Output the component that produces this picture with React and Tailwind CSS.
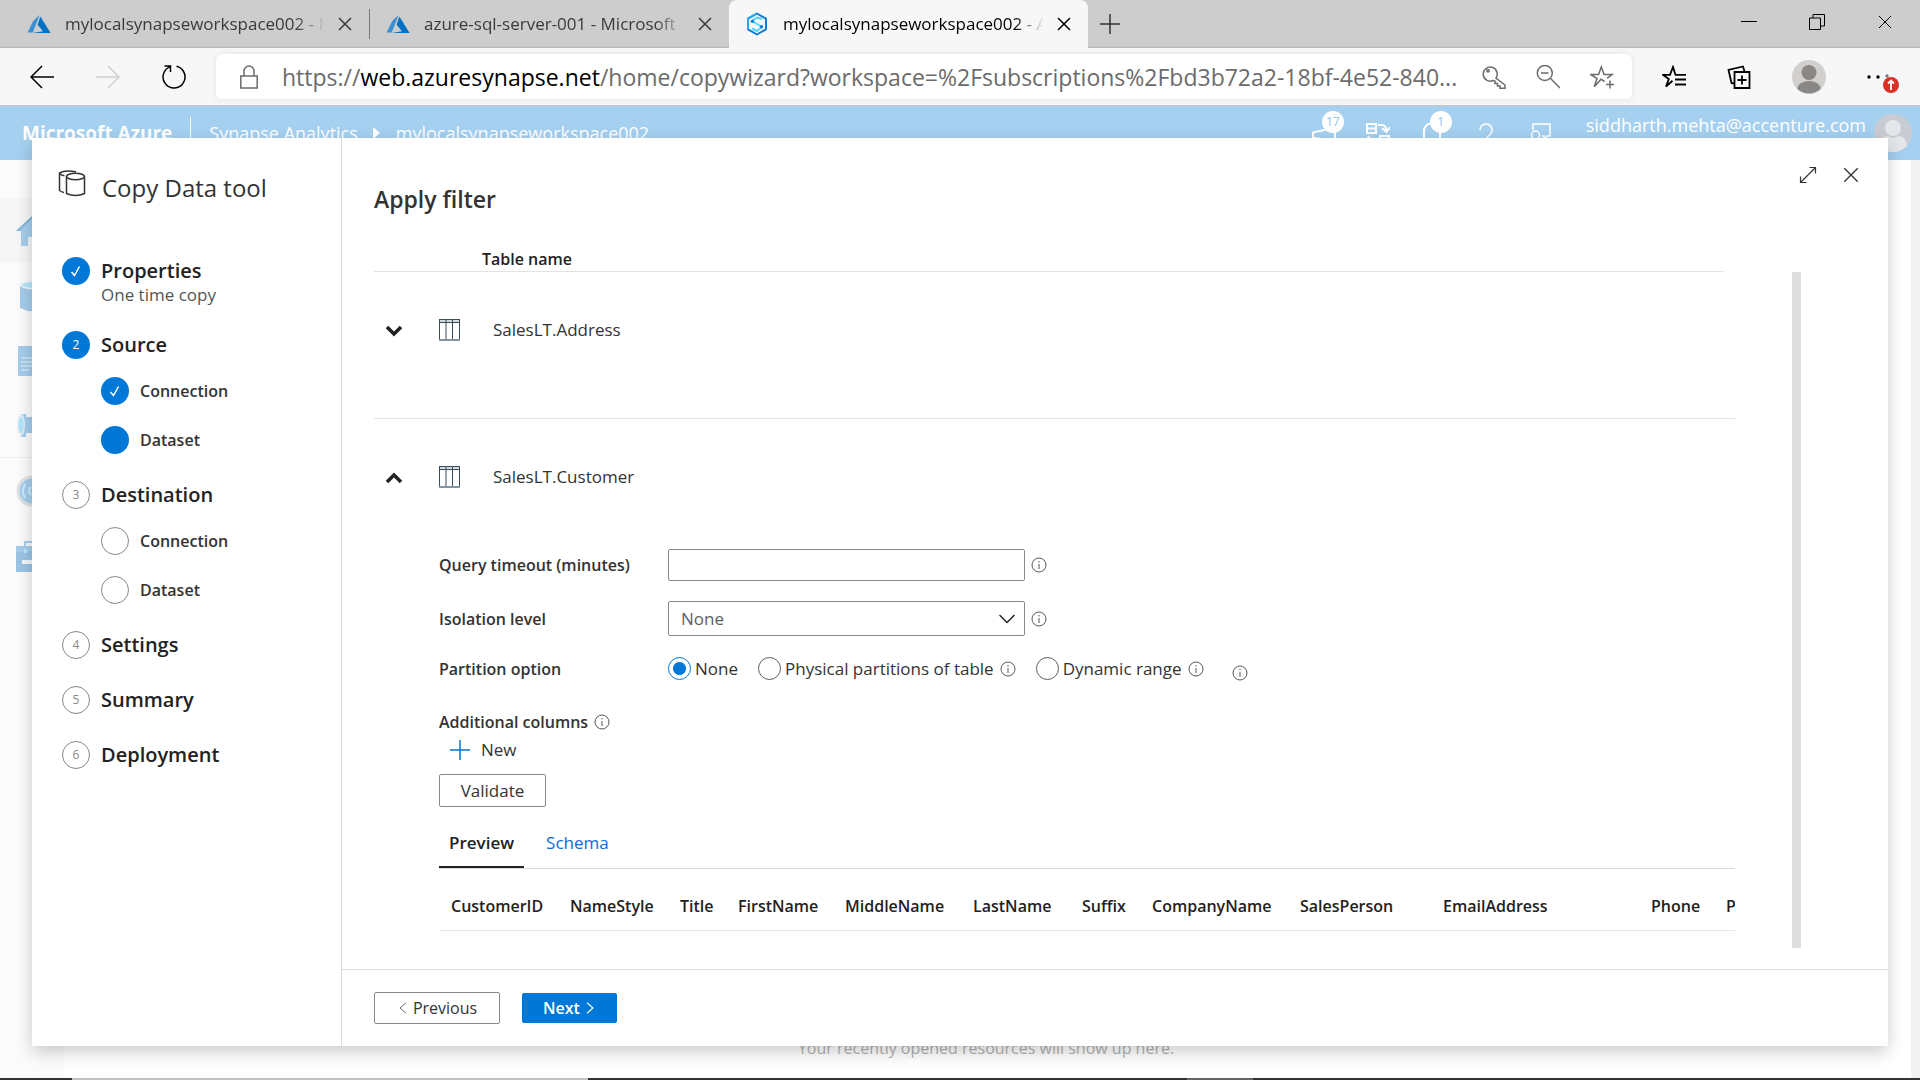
import { useState } from 'react';
import clsx from 'clsx';

const browserTabs = [
  { id: 1, title: 'mylocalsynapseworkspace002 - M', icon: 'azure' },
  { id: 2, title: 'azure-sql-server-001 - Microsoft', icon: 'azure' },
  { id: 3, title: 'mylocalsynapseworkspace002 - A', icon: 'synapse', active: true },
];

const steps = [
  { id: 1, name: 'Properties', caption: 'One time copy', state: 'done' },
  {
    id: 2,
    name: 'Source',
    state: 'current',
    children: [
      { name: 'Connection', state: 'done' },
      { name: 'Dataset', state: 'current' },
    ],
  },
  {
    id: 3,
    name: 'Destination',
    children: [{ name: 'Connection' }, { name: 'Dataset' }],
  },
  { id: 4, name: 'Settings' },
  { id: 5, name: 'Summary' },
  { id: 6, name: 'Deployment' },
];

const columns = [
  { name: 'CustomerID', width: 119 },
  { name: 'NameStyle', width: 110 },
  { name: 'Title', width: 58 },
  { name: 'FirstName', width: 107 },
  { name: 'MiddleName', width: 128 },
  { name: 'LastName', width: 109 },
  { name: 'Suffix', width: 70 },
  { name: 'CompanyName', width: 148 },
  { name: 'SalesPerson', width: 143 },
  { name: 'EmailAddress', width: 208 },
  { name: 'Phone', width: 75 },
  { name: 'PasswordHash', width: 140 },
];

const Svg = ({ className = 'size-6', box = 24, stroke = 1.5, children }) => (
  <svg
    viewBox={`0 0 ${box} ${box}`}
    className={clsx('shrink-0', className)}
    fill="none"
    stroke="currentColor"
    strokeWidth={stroke}
    aria-hidden="true"
  >
    {children}
  </svg>
);

const CloseIcon = ({ className = 'size-4', stroke = 1.5 }) => (
  <Svg className={className} box={16} stroke={stroke}>
    <path d="M2 2l12 12M14 2L2 14" />
  </Svg>
);

const AzureLogo = () => (
  <Svg stroke={0}>
    <path d="M12.6 3L6.2 8.9 0.6 20.5h5.2L12.6 3z" fill="#3b8fd3" />
    <path d="M13.4 4.5l-2.8 8.2 5.4 6.6L5.6 21H23.6L13.4 4.5z" fill="#0072c6" />
  </Svg>
);

const SynapseLogo = () => (
  <Svg stroke={2}>
    <path d="M12 1.500l9 5.200v10.600l-9 5.200-9-5.200V6.700z" stroke="#0f7bd8" strokeLinejoin="round" />
    <path d="M12 1.500l-9 5.200v10.600" stroke="#2aa5ee" strokeLinejoin="round" />
    <path d="M17 7l-5-1.500-5 3.500 10 6-5 4-5-2.500" stroke="#50d5f5" strokeLinejoin="round" />
    <circle cx="7.500" cy="9.300" r="1.700" fill="#0f7bd8" stroke="none" />
    <circle cx="16.500" cy="14.700" r="1.700" fill="#0f7bd8" stroke="none" />
  </Svg>
);

const InfoIcon = () => (
  <Svg className="size-4 text-[#555]" box={16} stroke={1}>
    <circle cx="8" cy="8" r="7" />
    <path d="M8 7v5M8 4v1.500" />
  </Svg>
);

const TableIcon = () => (
  <svg viewBox="0 0 21 22" className="h-[22px] w-[21px] shrink-0" fill="none" stroke="#3b4d58" aria-hidden="true">
    <rect x="0.500" y="0.500" width="20" height="3" fill="#d3dadd" />
    <path d="M0.500 0.500v21M7 0.500v21M13.500 0.500v21M20.500 0.500v21" />
    <path d="M0 21h21" stroke="#8295a0" strokeWidth="2" />
  </svg>
);

const BrowserTabs = () => (
  <div className="flex h-12 items-stretch bg-[#cdcdcd] pl-[11px] shadow-[inset_0_-2px_2px_-1px_#b0b0b0]">
    {browserTabs.map((tab) => (
      <div
        key={tab.id}
        className={clsx(
          'flex w-[359px] min-w-0 items-center px-4',
          tab.active ? 'rounded-t-lg bg-[#f7f7f7] text-black' : 'text-[#3a3a3a]'
        )}
      >
        {tab.icon === 'azure' ? <AzureLogo /> : <SynapseLogo />}
        <span className="mr-1 ml-3.5 min-w-0 flex-1 overflow-hidden whitespace-nowrap text-[17px] leading-6 [mask-image:linear-gradient(to_right,black_86%,transparent_97%)]">
          {tab.title}
        </span>
        <button type="button" aria-label="Close tab">
          <CloseIcon />
        </button>
        {tab.id === 1 && <span className="-mr-4 ml-4 h-[30px] w-px bg-[#777]" />}
      </div>
    ))}
    <button type="button" aria-label="New tab" className="ml-2.5 text-[#333]">
      <Svg>
        <path d="M12 2v20M2 12h20" />
      </Svg>
    </button>
    <div className="ml-auto flex items-center gap-[52px] pr-[27px] pb-1 text-black">
      <button type="button" aria-label="Minimize">
        <Svg className="size-4" box={16} stroke={1}>
          <path d="M0 7.500h16" />
        </Svg>
      </button>
      <button type="button" aria-label="Restore">
        <Svg className="size-4" box={16} stroke={1}>
          <path d="M0.500 4h11v11.500h-11zM4 4V0.500h11.500V12h-4" />
        </Svg>
      </button>
      <button type="button" aria-label="Close">
        <CloseIcon stroke={1} />
      </button>
    </div>
  </div>
);

const AddressBar = () => (
  <div className="flex h-[58px] items-center border-b border-[#c8c8c8] bg-[#f7f7f7] pr-[21px] pl-[30px]">
    <div className="flex gap-[42px]">
      <button type="button" aria-label="Back">
        <Svg stroke={1.5}>
          <path d="M24 12H1M12 1L1 12l11 11" />
        </Svg>
      </button>
      <button type="button" aria-label="Forward" className="text-[#cfcfcf]">
        <Svg>
          <path d="M0 12h23M12 1l11 11-11 11" />
        </Svg>
      </button>
      <button type="button" aria-label="Refresh">
        <Svg stroke={1.5}>
          <path d="M14.500 1.300A11 11 0 1 1 8.500 1.600M2.500 1h6v6" />
        </Svg>
      </button>
    </div>

    <div className="mx-[30px] flex h-[45px] min-w-0 flex-1 items-center rounded-md bg-white pr-[18px] pl-6 text-[#6b6b6b] shadow-[0_0_6px_#e2e2e2]">
      <svg viewBox="0 0 18 24" className="h-6 w-[18px] shrink-0" fill="none" stroke="currentColor" strokeWidth="1.500" aria-hidden="true">
        <path d="M0.800 11h16.400v12H0.800zM4 11V6a5 5 0 0 1 10 0v5" />
      </svg>
      <div className="ml-6 min-w-0 flex-1 overflow-hidden text-[23px] leading-8 whitespace-nowrap">
        https://<span className="text-black">web.azuresynapse.net</span>
        /home/copywizard?workspace=%2Fsubscriptions%2Fbd3b72a2-18bf-4e52-840...
      </div>
      <div className="flex shrink-0 gap-[30px]">
        <button type="button" aria-label="Passwords">
          <Svg>
            <path d="M14 13a7 7 0 1 0-3 2.500l2 .5v2.500h2.500V21H18v2.300h5V20z" />
            <circle cx="6" cy="5.800" r="1.200" />
          </Svg>
        </button>
        <button type="button" aria-label="Zoom out">
          <Svg>
            <circle cx="8.800" cy="8" r="7.500" />
            <path d="M14.300 13.300L24 23M5 8h7.500" />
          </Svg>
        </button>
        <button type="button" aria-label="Add to favorites">
          <Svg>
            <path d="M14.500 16.500L11 14.200 4.300 21.800 7 13.500 0.800 9.500H8.500L11.300 2l2.800 7.500h8l-5 3.800M20 15.500v8M16 19.500h8" />
          </Svg>
        </button>
      </div>
    </div>

    <div className="flex items-center gap-[41px]">
      <button type="button" aria-label="Favorites">
        <Svg stroke={1.8}>
          <path d="M10.500 15.800L4 21.500 6.800 14 1 9.800h7L11 2l2.500 7.800H24M13 14.500h11M13 19.500h11" />
        </Svg>
      </button>
      <button type="button" aria-label="Collections">
        <Svg stroke={1.8}>
          <path d="M7.500 7h15v16h-15zM15 10.500v9M10.500 15h9M7 18.500L4.500 18 1.500 5 16 1.500l1.500 5" />
        </Svg>
      </button>
      <button type="button" aria-label="Profile">
        <Svg className="size-[34px]" box={34} stroke={0}>
          <circle cx="17" cy="17" r="17" fill="#d2d0ce" />
          <circle cx="17" cy="12.500" r="7.500" fill="#8a8886" />
          <path d="M5.500 29a11.500 8 0 0 1 23 0 17 17 0 0 1-23 0z" fill="#8a8886" />
        </Svg>
      </button>
      <button type="button" aria-label="Settings and more">
        <svg viewBox="0 0 32 34" className="h-[34px] w-8" aria-hidden="true">
          <circle cx="2" cy="17" r="1.700" />
          <circle cx="11" cy="17" r="1.700" />
          <circle cx="20" cy="16" r="1.700" fill="#777" />
          <circle cx="24" cy="25" r="8" fill="#d93025" />
          <path d="M24 30v-9M21 23.500l3-3 3 3" stroke="#fff" strokeWidth="1.800" fill="none" />
        </svg>
      </button>
    </div>
  </div>
);

const Badge = ({ children }) => (
  <span className="absolute -top-3 left-2.5 flex size-[22px] items-center justify-center rounded-full bg-white text-xs text-[#8fc3ea]">
    {children}
  </span>
);

const PortalHeader = () => (
  <header className="flex h-[54px] shrink-0 items-center bg-[#a5d0f0] pr-2 pl-[22px] text-[18px] text-white">
    <span className="text-[19px] font-bold">Microsoft Azure</span>
    <span className="mr-[18px] ml-[18px] h-8 w-px bg-white" />
    <a href="#synapse">Synapse Analytics</a>
    <svg viewBox="0 0 8 12" className="mx-[15px] h-3 w-2" fill="currentColor" aria-hidden="true">
      <path d="M0 0l7 6-7 6z" />
    </svg>
    <a href="#workspace">mylocalsynapseworkspace002</a>

    <div className="ml-auto flex items-center gap-[30px] pt-1">
      <button type="button" aria-label="Announcements" className="relative">
        <Svg stroke={2}>
          <path d="M1 9.500l22-5v14l-22-4zM5 15v5h6v-4" />
        </Svg>
        <Badge>17</Badge>
      </button>
      <button type="button" aria-label="Switch workspace">
        <Svg stroke={2}>
          <path d="M1 1h9v9H1zM1 5.500h9M12 2h4q4 0 4.500 6M16 5l4.500 4L24 4M14 13h9v9h-9zM14 17.500h9M10 22H7q-5 0-5-6M0 17l2.500-3 3 3" />
        </Svg>
      </button>
      <button type="button" aria-label="Notifications" className="relative">
        <Svg stroke={2}>
          <path d="M1 17h22M4 17V8a8 8 0 0 1 16 0v9M10 21h4" />
        </Svg>
        <Badge>1</Badge>
      </button>
      <button type="button" aria-label="Help">
        <Svg>
          <path d="M6 7a6 6 0 1 1 10 4.500q-4 3-4 6.500M12 21v2" />
        </Svg>
      </button>
      <button type="button" aria-label="Feedback">
        <Svg>
          <path d="M5 7V1h17v12h-3l-3 3v-3h-2" />
          <circle cx="7.500" cy="12" r="4" />
          <path d="M2 23q0-7 6-7t6 7" />
        </Svg>
      </button>
    </div>
    <span className="ml-[34px] pb-4">siddharth.mehta@accenture.com</span>
    <Svg className="ml-2 size-[38px]" box={38} stroke={0}>
      <circle cx="19" cy="19" r="19" fill="#c9ccd2" />
      <circle cx="19" cy="14" r="8" fill="#e4e6e9" />
      <path d="M5 32q1-10 9-10 5 4 10 0 8 0 9 10a19 19 0 0 1-28 0z" fill="#e4e6e9" />
    </Svg>
  </header>
);

const HubNav = () => (
  <nav className="w-16 bg-[#fbfbfb] pt-[38px] text-[#a5cdec]">
    <a href="#home" aria-label="Home" className="flex h-[65px] items-center bg-[#f6f6f6] pl-4">
      <Svg className="size-8" box={32} stroke={0}>
        <path d="M16 1L0 16h5v15h7v-9h8v9h7V16h5z" fill="currentColor" />
        <path d="M16 1L0 16h3L16 4l13 12h3z" fill="#86b6dc" />
      </Svg>
    </a>
    <a href="#data" aria-label="Data" className="flex h-[65px] items-center pl-5">
      <Svg className="size-8" box={32} stroke={0}>
        <path d="M0 4v24q14 7 28 0V4z" fill="currentColor" />
        <ellipse cx="14" cy="5" rx="14" ry="4.500" fill="#eef6fb" />
        <ellipse cx="14" cy="5" rx="12" ry="3" fill="#b5e8fa" />
      </Svg>
    </a>
    <a href="#develop" aria-label="Develop" className="flex h-[65px] items-center pl-[18px]">
      <Svg className="size-8" box={32} stroke={1}>
        <path d="M0 1h26v30H0z" fill="currentColor" stroke="none" />
        <path d="M3 13h20M3 17h20M3 21h20M3 25h8" stroke="#eaf4fb" />
      </Svg>
    </a>
    <a href="#integrate" aria-label="Integrate" className="flex h-[65px] items-center border-b border-[#ececec] pl-[17px]">
      <Svg className="size-8" box={32} stroke={0}>
        <path d="M4 5h5v3h20v16H9v4H4z" fill="currentColor" />
        <ellipse cx="4" cy="16" rx="4" ry="11" fill="#e6eef4" />
        <ellipse cx="4" cy="16" rx="2.500" ry="8" fill="#b2e5fa" />
      </Svg>
    </a>
    <a href="#monitor" aria-label="Monitor" className="flex h-[65px] items-center pl-4">
      <Svg className="size-8" box={32} stroke={2}>
        <circle cx="16" cy="16" r="14" fill="currentColor" stroke="#dfe2e5" strokeWidth="3" />
        <path d="M9 9q-4 7 0 14M15 12q-4 4 0 8" stroke="#c9edfc" />
      </Svg>
    </a>
    <a href="#manage" aria-label="Manage" className="flex h-[65px] items-center pl-4">
      <Svg className="size-8" box={32} stroke={0}>
        <path d="M0 6h32v26H0zM8 6V1h16v5h-2V3H10v3z" fill="currentColor" />
        <path d="M0 12h32v20H0z" fill="#9cc4e4" />
        <path d="M6 20h20v4H6z" fill="#f5f9fc" />
        <path d="M8 9h3v4H8z" fill="#b7e9fb" />
      </Svg>
    </a>
  </nav>
);

const StepCircle = ({ state, label }) => (
  <span
    className={clsx(
      'flex size-7 shrink-0 items-center justify-center rounded-full text-xs font-normal',
      state ? 'bg-[#0078d7] text-white' : 'border border-[#8a8886] text-[#8a8886]'
    )}
  >
    {state === 'done' ? (
      <Svg className="size-3" box={12} stroke={1.5}>
        <path d="M1.500 7l3 3.500L9.500 1.500" />
      </Svg>
    ) : (
      label
    )}
  </span>
);

const WizardSteps = () => (
  <aside className="w-[310px] shrink-0 border-r border-[#dcdcdc]">
    <div className="flex pt-8 pl-[26px]">
      <Svg className="mr-4 size-7 text-[#333]" box={28}>
        <path d="M8.500 6.500v17q9 4 18 0v-17" />
        <ellipse cx="17.500" cy="6.500" rx="9" ry="3.200" />
        <path d="M18 1.800Q7-0.500 1.500 3v17.500q2 1.500 4.500 2M1.500 3.500q2 2 5 2.300" />
      </Svg>
      <h1 className="text-[24px] leading-9 text-[#333]">Copy Data tool</h1>
    </div>
    <ol className="mt-[51px] pl-[30px]">
      {steps.map((step) => (
        <li key={step.id} className="mb-[27px]">
          <a href={`#step-${step.id}`} className="flex h-7 items-center gap-[11px] text-[20px] font-semibold text-[#222]">
            <StepCircle state={step.state} label={step.id} />
            {step.name}
          </a>
          {step.caption && <p className="pl-[39px] text-[17px] leading-[19px] text-[#555]">{step.caption}</p>}
          {step.children && (
            <ol className="mt-[18px] flex flex-col gap-[21px] pl-[39px]">
              {step.children.map((child) => (
                <li key={child.name} className="flex h-7 items-center gap-[11px] text-base font-semibold text-[#333]">
                  <StepCircle state={child.state} />
                  {child.name}
                </li>
              ))}
            </ol>
          )}
        </li>
      ))}
    </ol>
  </aside>
);

const TableRow = ({ name, open, onToggle, children }) => (
  <section className={clsx('pt-[46px]', !open && 'border-b border-[#e3e3e3] pb-[76px]')}>
    <div className="flex h-6 items-center pl-[11px]">
      <button type="button" aria-label={`Toggle ${name}`} aria-expanded={open} onClick={onToggle}>
        <Svg className="size-[18px] text-[#222]" box={18} stroke={3.5}>
          <path d={open ? 'M2 14l7-7 7 7' : 'M2 6l7 7 7-7'} />
        </Svg>
      </button>
      <span className="mr-[33px] ml-9">
        <TableIcon />
      </span>
      <span className="text-[17px] text-[#333]">{name}</span>
    </div>
    {open && children}
  </section>
);

const partitionOptions = [
  { id: 'none', label: 'None' },
  { id: 'physical', label: 'Physical partitions of table', info: true },
  { id: 'dynamic', label: 'Dynamic range', info: true },
];

const SourceOptions = () => {
  const [partition, setPartition] = useState('none');
  const [tab, setTab] = useState('Preview');

  return (
    <div className="mt-[60px] pl-[65px] text-[17px] text-[#333]">
      <div className="flex flex-col gap-5">
        <div className="flex items-center">
          <label htmlFor="timeout" className="w-[229px] shrink-0 text-base font-semibold">Query timeout (minutes)</label>
          <input id="timeout" type="text" className="mr-1.5 h-8 w-[357px] rounded-xs border border-[#8a8886] px-3" />
          <InfoIcon />
        </div>

        <div className="flex items-center">
          <label htmlFor="isolation" className="w-[229px] shrink-0 text-base font-semibold">Isolation level</label>
          <div className="relative mr-1.5">
            <select id="isolation" className="h-[35px] w-[357px] appearance-none rounded-xs border border-[#8a8886] bg-white px-3 text-[#605e5c]">
              <option>None</option>
              <option>Read committed</option>
            </select>
            <Svg className="pointer-events-none absolute top-2.5 right-2.5 size-4 text-[#222]" box={16}>
              <path d="M0.500 4L8 11.500 15.500 4" />
            </Svg>
          </div>
          <InfoIcon />
        </div>

        <fieldset className="flex h-6 items-center">
          <legend className="float-left w-[229px] shrink-0 text-base font-semibold">Partition option</legend>
          <div className="flex items-center gap-5">
            {partitionOptions.map((option) => (
              <div key={option.id} className="flex items-center gap-1.5">
                <label className="flex items-center gap-1">
                  <input
                    type="radio"
                    name="partition"
                    checked={partition === option.id}
                    onChange={() => setPartition(option.id)}
                    className="size-[23px] appearance-none rounded-full border border-[#605e5c] checked:border-[#0078d7] checked:bg-[radial-gradient(circle,#0078d7_6px,transparent_7px)]"
                  />
                  {option.label}
                </label>
                {option.info && <InfoIcon />}
              </div>
            ))}
          </div>
          <span className="ml-7 pt-2">
            <InfoIcon />
          </span>
        </fieldset>
      </div>

      <div className="mt-[30px] flex h-6 items-center gap-1.5 text-base font-semibold">
        Additional columns
        <InfoIcon />
      </div>
      <button type="button" className="mt-1 flex h-6 items-center gap-2.5 pl-2.5">
        <Svg className="size-[22px] text-[#0078d7]" box={22}>
          <path d="M11 1v20M1 11h20" />
        </Svg>
        New
      </button>
      <button type="button" className="mt-3 block h-[33px] w-[107px] rounded-xs border border-[#8a8886]">Validate</button>

      <div role="tablist" className="mt-6 flex gap-3 border-b border-[#dcdcdc] leading-6">
        {['Preview', 'Schema'].map((name) => (
          <button
            key={name}
            type="button"
            role="tab"
            aria-selected={tab === name}
            onClick={() => setTab(name)}
            className={clsx(
              'border-b-2 px-2.5 pb-[11px]',
              tab === name ? 'border-[#222] font-semibold text-[#222]' : 'border-transparent text-[#0a6cdc]'
            )}
          >
            {name}
          </button>
        ))}
      </div>

      <div className="overflow-hidden">
        <table className="w-[1415px] table-fixed border-b border-[#e6e6e6]">
          <thead>
            <tr>
              {columns.map((col) => (
                <th
                  key={col.name}
                  style={{ width: col.width }}
                  className="pt-[25px] pb-3 pl-3 text-left text-base leading-6 font-semibold whitespace-nowrap text-[#222]"
                >
                  {col.name}
                </th>
              ))}
            </tr>
          </thead>
        </table>
      </div>
    </div>
  );
};

const CopyDataDialog = () => {
  const [openTable, setOpenTable] = useState('SalesLT.Customer');
  const toggle = (name) => setOpenTable(openTable === name ? null : name);

  return (
    <div role="dialog" aria-label="Copy Data tool" className="absolute inset-8 flex bg-white shadow-[0_6px_16px_rgba(0,0,0,0.2)]">
      <WizardSteps />
      <div className="flex min-w-0 flex-1 flex-col">
        <div className="flex justify-between pt-7 pr-7 pl-8 text-[#333]">
          <h2 className="mt-[17px] text-[23px] leading-8 font-semibold">Apply filter</h2>
          <div className="flex h-[18px] gap-[25px]">
            <button type="button" aria-label="Expand">
              <Svg className="size-[18px]" box={18} stroke={1.2}>
                <path d="M1.500 16.500l15-15M10.500 1.500h6v6M7.500 16.500h-6v-6" />
              </Svg>
            </button>
            <button type="button" aria-label="Close">
              <CloseIcon className="size-[18px]" stroke={1.2} />
            </button>
          </div>
        </div>

        <div className="mt-8 mr-[164px] ml-8 border-b border-[#e3e3e3] pl-[108px] text-base leading-6 font-semibold text-[#222]">
          Table name
        </div>

        <div className="flex min-h-0 flex-1 justify-between pr-[87px] pl-8">
          <div className="mr-[57px] min-w-0 flex-1 overflow-hidden">
            <TableRow name="SalesLT.Address" open={openTable === 'SalesLT.Address'} onToggle={() => toggle('SalesLT.Address')}>
              <SourceOptions />
            </TableRow>
            <TableRow name="SalesLT.Customer" open={openTable === 'SalesLT.Customer'} onToggle={() => toggle('SalesLT.Customer')}>
              <SourceOptions />
            </TableRow>
          </div>
          <div className="w-[9px] bg-[#dedede]" />
        </div>

        <div className="mt-[21px] flex items-start gap-[22px] border-t border-[#dcdcdc] py-[22px] pl-8">
          <button type="button" className="flex h-8 w-[126px] items-center justify-center gap-1 rounded-xs border border-[#8a8886] text-base text-[#333]">
            <Svg className="h-4 w-3" box={16} stroke={1}>
              <path d="M12 1L4 8l8 7" />
            </Svg>
            Previous
          </button>
          <button type="button" className="mt-px flex h-[30px] w-[95px] items-center justify-center gap-1 rounded-xs bg-[#0078d7] text-base font-semibold text-white">
            Next
            <Svg className="h-4 w-3" box={16} stroke={1.500}>
              <path d="M4 1l8 7-8 7" />
            </Svg>
          </button>
        </div>
      </div>
    </div>
  );
};

const App = () => (
  <div className="flex h-screen flex-col overflow-hidden bg-white font-['Open_Sans','Noto_Sans',sans-serif]">
    <BrowserTabs />
    <AddressBar />

    <div className="relative flex min-h-0 flex-1 flex-col">
      <PortalHeader />
      <div className="flex min-h-0 flex-1">
        <HubNav />
        <main className="flex flex-1 flex-col items-center justify-end pr-[118px] pb-[18px] pl-[115px]">
          <p className="text-base leading-6 text-[#b3b3b3]">Your recently opened resources will show up here.</p>
        </main>
        <div className="w-[9px] bg-[#f2f2f2]" />
      </div>
      <CopyDataDialog />
    </div>

    {/* taskbar edge */}
    <div className="flex h-0.5 shrink-0 bg-[#333]">
      <div className="ml-[72px] w-[516px] bg-[#c0c0c0]" />
      <div className="ml-[599px] w-[66px] bg-[#666]" />
    </div>
  </div>
);

export default App;
